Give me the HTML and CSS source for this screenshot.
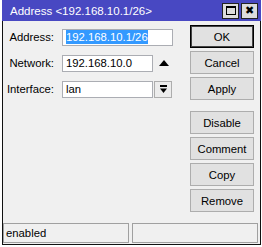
FILE: index.html
```html
<!DOCTYPE html>
<html>
<head>
  <meta charset="utf-8">
  <title>Address</title>
  <link rel="stylesheet" href="styles.css">
</head>
<body>
<div class="win">
  <div class="title-bar">
    <span class="title">Address &lt;192.168.10.1/26&gt;</span>
    <div class="title-btns">
      <span class="tbtn"><span class="max-icon"></span></span>
      <span class="tbtn close">&#x2716;</span>
    </div>
  </div>

  <div class="body">
    <div class="form">
      <div class="row">
        <label>Address:</label>
        <div class="field wide"><span class="sel">192.168.10.1/26</span></div>
      </div>
      <div class="row">
        <label>Network:</label>
        <div class="field">192.168.10.0</div>
        <span class="up-arrow"></span>
      </div>
      <div class="row">
        <label>Interface:</label>
        <div class="field">lan</div>
        <span class="drop-btn">
          <svg width="9" height="9" viewBox="0 0 9 9"><rect x="1" y="0" width="7" height="2" fill="#000"/><path d="M1 3.5 H8 L4.5 8 Z" fill="#000"/></svg>
        </span>
      </div>
    </div>

    <div class="buttons">
      <div class="btn default">OK</div>
      <div class="btn">Cancel</div>
      <div class="btn">Apply</div>
      <div class="btn spaced">Disable</div>
      <div class="btn">Comment</div>
      <div class="btn">Copy</div>
      <div class="btn">Remove</div>
    </div>
  </div>

  <div class="status">
    <div class="cell">enabled</div>
    <div class="cell"></div>
  </div>
</div>
</body>
</html>
```

FILE: styles.css
```css
html, body {
  margin: 0;
  padding: 0;
  background: #fff;
  font-family: "Liberation Sans", Arial, sans-serif;
  font-size: 11.3px;
}

.win {
  width: 257px;
  margin-left: 2px;
  border: 1px solid #111;
  border-top: none;
  background: #f0f0f0;
}

.title-bar {
  height: 21px;
  background: #4848c2;
  display: flex;
  align-items: center;
  justify-content: space-between;
  margin-left: -1px;
  margin-right: -1px;
}
.title {
  color: #fff;
  font-size: 11.5px;
  padding-left: 8px;
}
.title-btns {
  display: flex;
  gap: 2px;
  padding-right: 3px;
}
.tbtn {
  width: 17px;
  height: 16px;
  background: #dcdcdc;
  border: 1px solid #222;
  display: flex;
  align-items: center;
  justify-content: center;
  box-sizing: border-box;
}
.max-icon {
  width: 10px;
  height: 9px;
  border: 1px solid #000;
  border-top-width: 2px;
  box-sizing: border-box;
}
.close {
  font-size: 11px;
  font-weight: bold;
  line-height: 1;
  font-family: "DejaVu Sans", sans-serif;
}

.body {
  display: flex;
  justify-content: space-between;
  padding: 4px 6px 0 0;
  height: 198px;
}

.form {
  padding-top: 3px;
  display: flex;
  flex-direction: column;
  gap: 8px;
}
.row {
  display: flex;
  align-items: center;
  height: 18px;
}
.row label {
  width: 51px;
  text-align: right;
  margin-right: 8px;
  color: #000;
}
.field {
  width: 91px;
  height: 17px;
  box-sizing: border-box;
  background: #fff;
  border: 1px solid #abadb3;
  padding-left: 3px;
  line-height: 15px;
}
.field.wide {
  width: 111px;
}
.sel {
  background: #3399ff;
  color: #fff;
  display: inline-block;
  line-height: 14px;
}
.up-arrow {
  margin-left: 6px;
  width: 0;
  height: 0;
  border-left: 5px solid transparent;
  border-right: 5px solid transparent;
  border-bottom: 6px solid #000;
}
.drop-btn {
  margin-left: 1px;
  width: 18px;
  height: 17px;
  box-sizing: border-box;
  border: 1px solid #adadad;
  background: #ececec;
  display: flex;
  align-items: center;
  justify-content: center;
}

.buttons {
  display: flex;
  flex-direction: column;
  gap: 3px;
}
.btn {
  width: 64px;
  height: 23px;
  box-sizing: border-box;
  border: 1px solid #adadad;
  background: #e1e1e1;
  display: flex;
  align-items: center;
  justify-content: center;
  color: #000;
}
.btn.default {
  border: 1px solid #000;
  box-shadow: inset 0 0 0 1px #444;
}
.btn.spaced {
  margin-top: 8px;
}

.status {
  display: flex;
  gap: 3px;
  padding: 0 2px 1px 0;
}
.cell {
  flex: 1;
  height: 20px;
  box-sizing: border-box;
  border: 1px solid #a0a0a0;
  padding-left: 2px;
  line-height: 18px;
}
```
